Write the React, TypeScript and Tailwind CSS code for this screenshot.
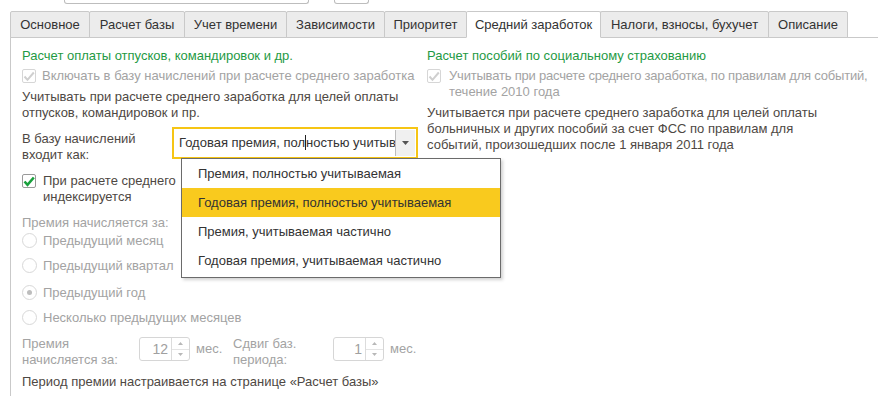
import React from "react";

const font = { fontFamily: '"Liberation Sans", Arial, sans-serif' };

function Check({ disabled = false }: { disabled?: boolean }) {
  return (
    <div
      className={`w-[14px] h-[14px] shrink-0 border rounded-[2px] bg-white flex items-center justify-center ${
        disabled ? "border-[#d6d6d6]" : "border-[#9a9a9a]"
      }`}
    >
      <svg width="12" height="11" viewBox="0 0 12 11">
        <path
          d="M1.5 5.5 L4.5 8.8 L10.8 1.5"
          fill="none"
          stroke={disabled ? "#cfcfcf" : "#19a03c"}
          strokeWidth={disabled ? 2 : 2.6}
        />
      </svg>
    </div>
  );
}

function Radio({ checked = false, label }: { checked?: boolean; label: string }) {
  return (
    <div className="flex items-center h-[25px] gap-[6px]">
      <div className="w-[15px] h-[15px] rounded-full border border-[#d8d8d8] bg-white flex items-center justify-center">
        {checked && <div className="w-[5px] h-[5px] rounded-full bg-[#bdbdbd]" />}
      </div>
      <span className="text-[#a3a3a3]">{label}</span>
    </div>
  );
}

function Spin({ value }: { value: string }) {
  return (
    <div className="flex w-[51px] h-[24px] border border-[#d6d6d6] rounded-[3px] bg-white">
      <div className="flex-1 flex items-center justify-end pr-[3px] text-[#a0a0a0] text-[14px]">{value}</div>
      <div className="w-[18px] border-l border-[#dcdcdc] flex flex-col">
        <div className="flex-1 flex items-center justify-center border-b border-[#e4e4e4]">
          <svg width="5" height="3" viewBox="0 0 5 3">
            <path d="M0 3 L2.5 0 L5 3 Z" fill="#b8b8b8" />
          </svg>
        </div>
        <div className="flex-1 flex items-center justify-center">
          <svg width="5" height="3" viewBox="0 0 5 3">
            <path d="M0 0 L2.5 3 L5 0 Z" fill="#b8b8b8" />
          </svg>
        </div>
      </div>
    </div>
  );
}

const tabs: [string, number][] = [
  ["Основное", 80],
  ["Расчет базы", 96],
  ["Учет времени", 103],
  ["Зависимости", 99],
  ["Приоритет", 83],
  ["Средний заработок", 135],
  ["Налоги, взносы, бухучет", 169],
  ["Описание", 80],
];

export default function App() {
  return (
    <div
      className="relative w-[878px] h-[396px] overflow-hidden bg-white text-[13px] leading-[16px] text-[#4e4843]"
      style={font}
    >
      {/* partial fields above */}
      <div className="flex h-[11px]">
        <div className="ml-[64px] w-[245px] h-[4px] border-x border-b border-[#bdbdbd] rounded-b-[3px]" />
        <div className="ml-[25px] w-[35px] h-[4px] border-x border-b border-[#bdbdbd] rounded-b-[3px]" />
      </div>

      {/* tabs */}
      <div className="flex pl-[10px] h-[27px]">
        {tabs.map(([t, w], i) => {
          const active = i === 5;
          return (
            <div
              key={t}
              style={{ width: w }}
              className={`h-[27px] flex items-center justify-center border border-[#c9c9c9] rounded-t-[2px] -mr-px text-[13px] text-[#333] ${
                active ? "bg-white border-b-white z-10" : "bg-[#ececec]"
              }`}
            >
              {t}
            </div>
          );
        })}
      </div>

      {/* panel */}
      <div className="ml-[10px] -mt-px border-l border-t border-[#c9c9c9] h-[400px] pl-[11px] pt-[10px] flex">
        {/* left column */}
        <div className="w-[405px] shrink-0 flex flex-col">
          <div className="text-[#1f9a44]">Расчет оплаты отпусков, командировок и др.</div>
          <div className="flex items-center gap-[6px] mt-[4px] h-[16px]">
            <Check disabled />
            <span className="text-[#a3a3a3]">Включать в базу начислений при расчете среднего заработка</span>
          </div>
          <div className="mt-[5px]">
            Учитывать при расчете среднего заработка для целей оплаты
            <br />
            отпусков, командировок и пр.
          </div>

          <div className="flex mt-[6px]">
            <div className="w-[150px] pt-[4px]">
              В базу начислений
              <br />
              входит как:
            </div>
            <div className="w-[246px] h-[32px] border-2 border-[#f6c514] flex items-center bg-white">
              <div className="flex-1 overflow-hidden whitespace-nowrap pl-[5px] text-[#333] relative">
                Годовая премия, пол
                <span className="inline-block w-px h-[15px] bg-[#222] align-middle -mt-[2px]" />
                ностью учитыв
              </div>
              <div className="w-[20px] h-[26px] mr-[1px] bg-[#f0f0f0] border-l border-[#bdbdbd] flex items-center justify-center">
                <svg width="7" height="4" viewBox="0 0 7 4">
                  <path d="M0 0 L3.5 4 L7 0 Z" fill="#555" />
                </svg>
              </div>
            </div>
          </div>

          <div className="flex gap-[7px] mt-[10px]">
            <div className="pt-[1px]">
              <Check />
            </div>
            <div>
              При расчете среднего
              <br />
              индексируется
            </div>
          </div>

          <div className="mt-[10px] text-[#a3a3a3]">Премия начисляется за:</div>
          <div className="-mt-[3px] flex flex-col">
            <Radio label="Предыдущий месяц" />
            <Radio label="Предыдущий квартал" />
            <div className="h-[2px]" />
            <Radio checked label="Предыдущий год" />
            <Radio label="Несколько предыдущих месяцев" />
          </div>

          <div className="flex mt-[6px] text-[#a3a3a3]">
            <div className="w-[117px]">
              Премия
              <br />
              начисляется за:
            </div>
            <div className="pt-[1px]">
              <Spin value="12" />
            </div>
            <div className="ml-[6px] pt-[5px] w-[37px]">мес.</div>
            <div className="w-[100px]">
              Сдвиг баз.
              <br />
              периода:
            </div>
            <div className="pt-[1px]">
              <Spin value="1" />
            </div>
            <div className="ml-[6px] pt-[5px]">мес.</div>
          </div>

          <div className="mt-[6px]">Период премии настраивается на странице «Расчет базы»</div>
        </div>

        {/* right column */}
        <div className="flex-1 min-w-0 flex flex-col">
          <div className="text-[#1f9a44] whitespace-nowrap">Расчет пособий по социальному страхованию</div>
          <div className="flex gap-[8px] mt-[4px]">
            <div className="pt-[1px]">
              <Check disabled />
            </div>
            <div className="min-w-0 text-[#a3a3a3]">
              <div className="whitespace-nowrap tracking-[-0.2px]">
                Учитывать при расчете среднего заработка, по правилам для событий,
              </div>
              <div>течение 2010 года</div>
            </div>
          </div>
          <div className="mt-[5px]">
            Учитывается при расчете среднего заработка для целей оплаты
            <br />
            больничных и других пособий за счет ФСС по правилам для
            <br />
            событий, произошедших после 1 января 2011 года
          </div>
        </div>
      </div>

      {/* dropdown popup */}
      <div className="absolute left-[181px] top-[158px] w-[320px] border border-[#6b6b6b] bg-white shadow-[2px_2px_3px_rgba(0,0,0,0.18)] text-[#333]">
        <div className="h-[29px] flex items-center pl-[16px]">Премия, полностью учитываемая</div>
        <div className="h-[29px] flex items-center pl-[16px] bg-[#f9ca1e]">Годовая премия, полностью учитываемая</div>
        <div className="h-[29px] flex items-center pl-[16px]">Премия, учитываемая частично</div>
        <div className="h-[29px] flex items-center pl-[16px] mb-[2px]">Годовая премия, учитываемая частично</div>
      </div>
    </div>
  );
}
